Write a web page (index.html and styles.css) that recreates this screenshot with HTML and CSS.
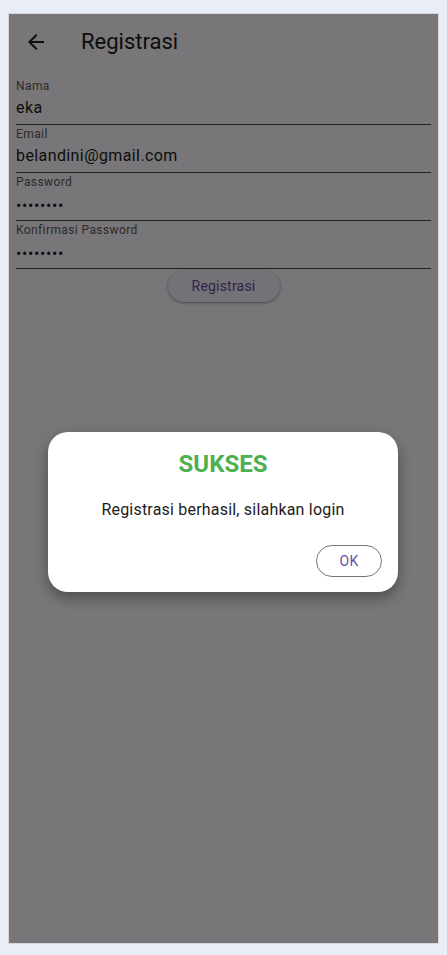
FILE: index.html
```html
<!DOCTYPE html>
<html lang="id">
<head>
<meta charset="utf-8">
<title>Registrasi</title>
<link rel="stylesheet" href="styles.css">
</head>
<body>
<div class="device">
  <header class="appbar">
    <span class="back">
      <svg width="24" height="24" viewBox="0 0 24 24"><path d="M20 11H7.830l5.590-5.590L12 4l-8 8 8 8 1.410-1.410L7.830 13H20v-2z" fill="#1d1b20"/></svg>
    </span>
    <h1 class="title">Registrasi</h1>
  </header>
  <form class="form">
    <div class="field"><span class="label">Nama</span><span class="value">eka</span></div>
    <div class="field"><span class="label">Email</span><span class="value">belandini@gmail.com</span></div>
    <div class="field"><span class="label">Password</span><span class="value dots">••••••••</span></div>
    <div class="field"><span class="label">Konfirmasi Password</span><span class="value dots">••••••••</span></div>
    <div class="actions"><span class="btn-elevated">Registrasi</span></div>
  </form>
  <div class="scrim"></div>
  <div class="dialog">
    <h2 class="dialog-title">SUKSES</h2>
    <p class="dialog-msg">Registrasi berhasil, silahkan login</p>
    <div class="dialog-actions"><span class="btn-outlined">OK</span></div>
  </div>
</div>
</body>
</html>
```

FILE: styles.css
```css
* { box-sizing: border-box; }
html, body { margin: 0; }
body {
  background: #e9eef6;
  padding: 13px 8px 11px;
  font-family: Roboto, "Noto Sans", sans-serif;
  color: #1d1b20;
}
.device {
  position: relative;
  height: 931px;
  background: #fffbfe;
  border: 1px solid #d6d5dc;
  overflow: hidden;
}
.appbar {
  height: 55px;
  display: flex;
  align-items: center;
}
.back {
  width: 54px;
  height: 24px;
  display: flex;
  justify-content: center;
}
.back svg { display: block; }
.title {
  margin: 0 0 0 18px;
  font-size: 22px;
  font-weight: 400;
  line-height: 28px;
  color: #1d1b20;
}
.form {
  padding: 8px 7px 0;
  display: flex;
  flex-direction: column;
}
.field {
  height: 48px;
  border-bottom: 1px solid #49454f;
  display: flex;
  flex-direction: column;
  padding-top: 1px;
}
.label {
  font-size: 12px;
  line-height: 16px;
  color: #5f5a62;
  letter-spacing: 0.4px;
}
.value {
  margin-top: 2px;
  font-size: 16px;
  line-height: 24px;
  color: #1d1b20;
  letter-spacing: 0.4px;
}
.dots {
  padding-top: 2px;
  font-size: 16px;
  letter-spacing: 0.6px;
}
.actions {
  display: flex;
  justify-content: center;
  padding-top: 1px;
}
.btn-elevated {
  width: 112px;
  height: 32px;
  border-radius: 16px;
  background: #f7f2fa;
  box-shadow: 0 1px 2px rgba(0,0,0,0.25), 0 1px 3px 1px rgba(0,0,0,0.12);
  color: #6750a4;
  font-size: 14px;
  font-weight: 400;
  letter-spacing: 0.2px;
  display: flex;
  align-items: center;
  justify-content: center;
}
.scrim {
  position: absolute;
  inset: 0;
  background: rgba(0,0,0,0.53);
}
.dialog {
  position: absolute;
  left: 39px;
  top: 418px;
  width: 350px;
  height: 160px;
  background: #fff;
  border-radius: 20px;
  box-shadow: 0 6px 14px rgba(0,0,0,0.35);
  padding: 16px 16px 15px;
  display: flex;
  flex-direction: column;
}
.dialog-title {
  margin: 0;
  text-align: center;
  font-size: 24px;
  font-weight: 700;
  line-height: 32px;
  color: #4caf50;
}
.dialog-msg {
  margin: 18px 0 0;
  text-align: center;
  font-size: 16px;
  line-height: 24px;
  letter-spacing: 0.2px;
  color: #1d1b20;
}
.dialog-actions {
  margin-top: auto;
  display: flex;
  justify-content: flex-end;
}
.btn-outlined {
  width: 66px;
  height: 32px;
  border: 1px solid #79747e;
  border-radius: 16px;
  color: #6750a4;
  font-size: 14px;
  font-weight: 400;
  letter-spacing: 0.2px;
  display: flex;
  align-items: center;
  justify-content: center;
}
```
